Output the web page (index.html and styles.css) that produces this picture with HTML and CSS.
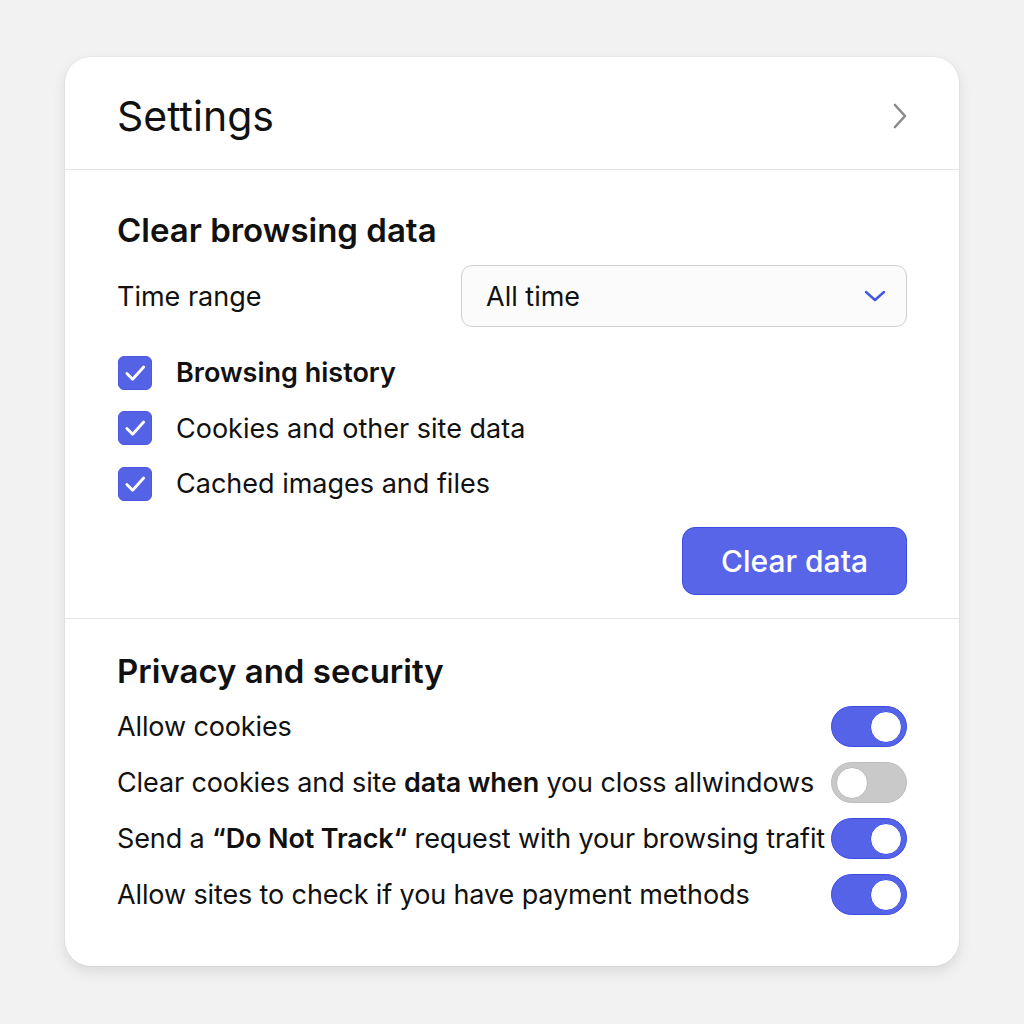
FILE: index.html
```html
<!DOCTYPE html>
<html lang="en">
<head>
<meta charset="utf-8">
<title>Settings</title>
<link rel="stylesheet" href="styles.css">
</head>
<body>
<div class="card">
  <header class="card-header">
    <h1 class="title">Settings</h1>
    <svg class="chev-right" width="18" height="28" viewBox="0 0 18 28"><path d="M4 3 L14 14 L4 25" fill="none" stroke="#8a8a8a" stroke-width="2.6" stroke-linecap="round" stroke-linejoin="round"/></svg>
  </header>

  <section class="section section-clear">
    <h2 class="section-title">Clear browsing data</h2>
    <div class="range-row">
      <span class="label">Time range</span>
      <div class="select">
        <span>All time</span>
        <svg width="22" height="14" viewBox="0 0 22 14"><path d="M2 3 L11 11 L20 3" fill="none" stroke="#4356e2" stroke-width="2.4" stroke-linecap="round" stroke-linejoin="round"/></svg>
      </div>
    </div>
    <ul class="checks">
      <li class="check-row"><span class="checkbox"><svg width="26" height="26" viewBox="0 0 24 24"><path d="M4.5 12.5 L9.8 17.8 L20 6.5" fill="none" stroke="#fff" stroke-width="2.6" stroke-linecap="round" stroke-linejoin="round"/></svg></span><span class="check-label strong">Browsing history</span></li>
      <li class="check-row"><span class="checkbox"><svg width="26" height="26" viewBox="0 0 24 24"><path d="M4.5 12.5 L9.8 17.8 L20 6.5" fill="none" stroke="#fff" stroke-width="2.6" stroke-linecap="round" stroke-linejoin="round"/></svg></span><span class="check-label">Cookies and other site data</span></li>
      <li class="check-row"><span class="checkbox"><svg width="26" height="26" viewBox="0 0 24 24"><path d="M4.5 12.5 L9.8 17.8 L20 6.5" fill="none" stroke="#fff" stroke-width="2.6" stroke-linecap="round" stroke-linejoin="round"/></svg></span><span class="check-label">Cached images and files</span></li>
    </ul>
    <div class="actions">
      <button class="btn-primary">Clear data</button>
    </div>
  </section>

  <section class="section section-privacy">
    <h2 class="section-title">Privacy and security</h2>
    <ul class="toggles">
      <li class="toggle-row"><span class="toggle-label">Allow cookies</span><span class="toggle on"><span class="knob"></span></span></li>
      <li class="toggle-row"><span class="toggle-label">Clear cookies and site <b class="med">data when</b> you closs allwindows</span><span class="toggle off"><span class="knob"></span></span></li>
      <li class="toggle-row"><span class="toggle-label">Send a <b class="med">“Do Not Track“</b> request with your browsing trafit</span><span class="toggle on"><span class="knob"></span></span></li>
      <li class="toggle-row"><span class="toggle-label">Allow sites to check if you have payment methods</span><span class="toggle on"><span class="knob"></span></span></li>
    </ul>
  </section>
</div>
</body>
</html>
```
FILE: styles.css
```css
* { box-sizing: border-box; }
html, body { margin: 0; padding: 0; }
body {
  background: #f2f2f2;
  font-family: Inter, "Noto Sans", "Liberation Sans", sans-serif;
  color: #111;
  width: 1024px;
  height: 1024px;
  padding-top: 57px;
  padding-left: 65px;
}
.card {
  width: 894px;
  height: 909px;
  background: #fff;
  border-radius: 26px;
  box-shadow: 0 6px 14px rgba(0,0,0,0.10), 0 0 0 1px rgba(0,0,0,0.03);
  overflow: hidden;
}
.card-header {
  height: 113px;
  display: flex;
  align-items: center;
  justify-content: space-between;
  padding: 6px 50px 0 52px;
  border-bottom: 1.5px solid #e4e4e4;
}
.title {
  margin: 0;
  font-size: 41px;
  font-weight: 400;
  line-height: 1;
}
.chev-right { display: block; }
.section {
  padding: 0 52px;
}
.section-clear {
  padding-top: 42px;
  padding-bottom: 23px;
  border-bottom: 1.5px solid #e6e6e6;
}
.section-title {
  margin: 0;
  font-size: 33px;
  font-weight: 600;
  line-height: 36px;
}
.range-row {
  display: flex;
  align-items: center;
  justify-content: space-between;
  margin-top: 17px;
}
.label { font-size: 27px; }
.select {
  width: 446px;
  height: 62px;
  border: 1.5px solid #cfcfcf;
  border-radius: 11px;
  background: #fbfbfb;
  display: flex;
  align-items: center;
  justify-content: space-between;
  padding: 0 20px 0 24px;
  font-size: 27px;
}
.checks {
  list-style: none;
  margin: 18px 0 0;
  padding: 0;
}
.check-row {
  height: 55.5px;
  display: flex;
  align-items: center;
  gap: 24px;
  padding-left: 1px;
}
.checkbox {
  width: 34px;
  height: 34px;
  border-radius: 6px;
  background: #5462e6;
  border: 1.5px solid #4a58e2;
  display: flex;
  align-items: center;
  justify-content: center;
}
.checkbox svg { display: block; }
.check-label { font-size: 27px; }
.check-label.strong { font-weight: 600; }
.actions {
  display: flex;
  justify-content: flex-end;
  margin-top: 15px;
}
.btn-primary {
  width: 225px;
  height: 68px;
  border-radius: 13px;
  background: #5865e8;
  border: 1.5px solid #3c4ce2;
  color: #fff;
  font-family: inherit;
  font-size: 30px;
  font-weight: 500;
  padding: 0;
}
.section-privacy {
  padding-top: 34px;
}
.toggles {
  list-style: none;
  margin: 10px 0 0;
  padding: 0;
}
.toggle-row {
  height: 56px;
  display: flex;
  align-items: center;
  justify-content: space-between;
}
.toggle-label { font-size: 27px; letter-spacing: -0.12px; white-space: nowrap; }
.med { font-weight: 600; }
.toggle {
  width: 76px;
  height: 41px;
  border-radius: 21px;
  display: flex;
  align-items: center;
  padding: 0 4px;
  flex: none;
}
.toggle.on {
  background: #5563e8;
  border: 1.5px solid #3b4ce3;
  justify-content: flex-end;
}
.toggle.off {
  background: #c9c9c9;
  border: 1.5px solid #bdbdbd;
  justify-content: flex-start;
}
.knob {
  width: 32px;
  height: 32px;
  border-radius: 50%;
  background: #fff;
}
.toggle.on .knob { border: 1.5px solid #3b4ce3; }
.toggle.off .knob { border: 1.5px solid #b8b8b8; }
```
